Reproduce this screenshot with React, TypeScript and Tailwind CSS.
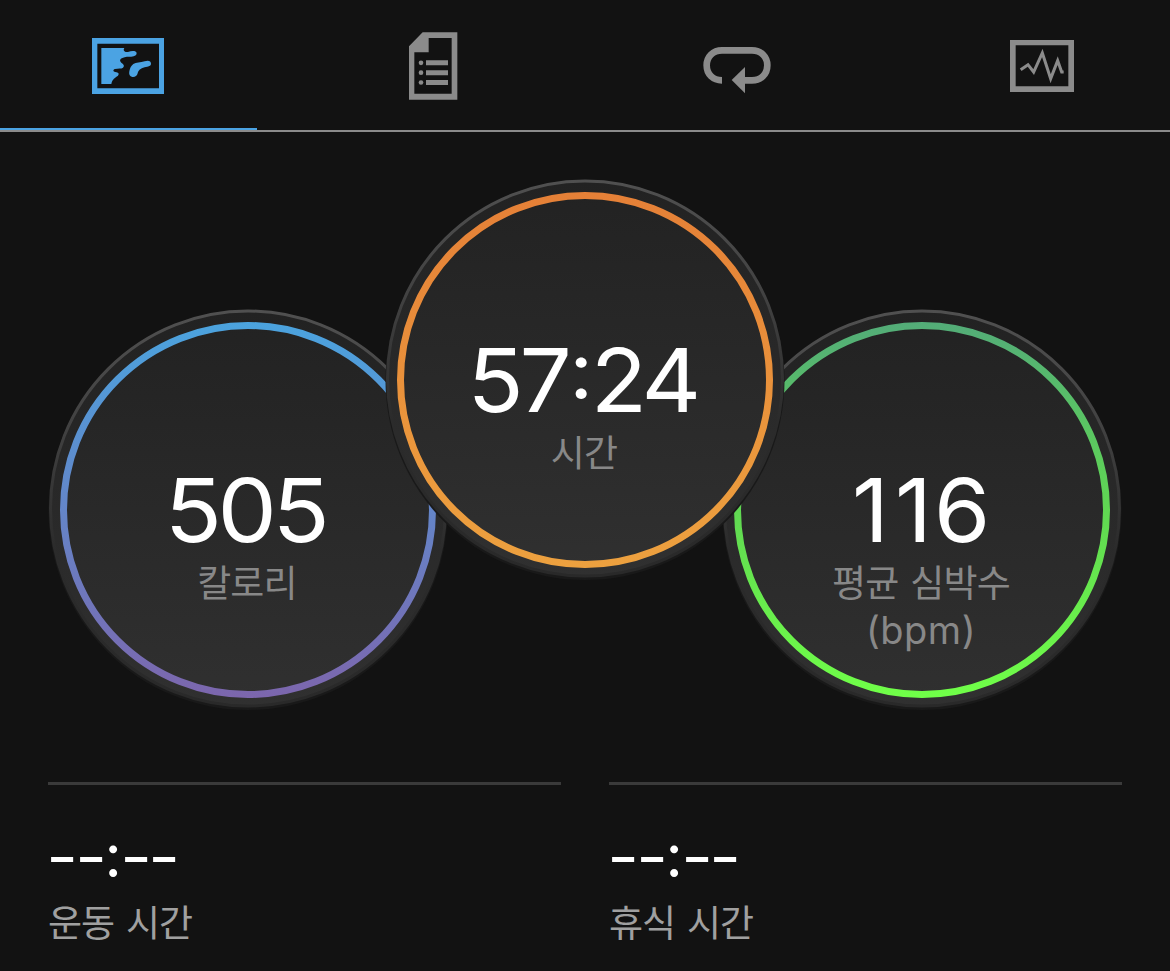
import type { ReactNode } from "react";

const FONT = "font-['Inter','Noto_Sans_CJK_KR',sans-serif]";

function MapIcon() {
  return (
    <svg width="72" height="56" viewBox="66 54 216 168" fill="#4ba3e3">
      <path fillRule="evenodd" d="M66 54H282V222H66ZM82 71V205H267V71Z" />
      <path d="M94 84H163C158 91 164 98 174 96C181 93 187 92 193 93C203 95 202 106 191 109C181 112 173 109 164 112C150 115 147 122 154 128C162 132 164 139 159 143C154 147 145 144 135 147C128 149 129 155 136 156C146 157 149 162 143 168C136 173 127 177 124 192H94Z" />
      <path d="M190 132C198 127 211 128 224 124C236 120 243 124 243 131C243 138 235 139 224 142C211 146 205 151 203 160C201 169 194 172 187 171C179 170 176 163 178 154C180 144 183 137 190 132Z" />
    </svg>
  );
}

function ListIcon() {
  return (
    <svg width="50" height="68" viewBox="54 36 150 204" fill="#8b8b8b">
      <path fillRule="evenodd" d="M98 37H202V239H57V79ZM116 54V97H73V221H185V54Z" />
      <circle cx="93" cy="128.500" r="7" />
      <circle cx="93" cy="158" r="7" />
      <circle cx="93" cy="187.500" r="7" />
      <path d="M108 121H174V136H108ZM108 151H174V166H108ZM108 180H174V195H108Z" />
    </svg>
  );
}

function LapIcon() {
  return (
    <svg width="68" height="48" viewBox="39 48 204 144">
      <path d="M96 151C69 151 50 133 50 106C50 80 69 61 96 61H186C213 61 232 80 232 106C232 133 213 151 186 151H160" fill="none" stroke="#8b8b8b" strokeWidth="20" />
      <path d="M125 150L165 111V190Z" fill="#8b8b8b" />
    </svg>
  );
}

function PulseIcon() {
  return (
    <svg width="64" height="52" viewBox="30 30 192 156">
      <path fillRule="evenodd" fill="#8b8b8b" d="M30 30H222V186H30ZM47 46V169H205V46Z" />
      <path d="M62 119L84 104L101 126L127 69L152 146L173 92L185 126H191" fill="none" stroke="#8b8b8b" strokeWidth="9" />
    </svg>
  );
}

function Tab({ active, children }: { active?: boolean; children: ReactNode }) {
  return (
    <button className={`flex h-[130px] w-[257px] items-center justify-center border-b-2 ${active ? "border-[#4ba3e3]" : "border-transparent"}`}>
      {children}
    </button>
  );
}

type DialProps = { id: string; value: ReactNode; label: ReactNode; stops: [string, string, string]; className: string };

function Dial({ id, value, label, stops, className }: DialProps) {
  return (
    <div className={`grid h-[400px] w-[400px] shrink-0 ${className}`}>
      <svg className="col-start-1 row-start-1 overflow-visible" width="400" height="400" viewBox="0 0 400 400">
        <defs>
          <linearGradient id={`${id}-ring`} x1="0" y1="12" x2="0" y2="388" gradientUnits="userSpaceOnUse">
            <stop offset="0" stopColor={stops[0]} />
            <stop offset="0.5" stopColor={stops[1]} />
            <stop offset="1" stopColor={stops[2]} />
          </linearGradient>
          <linearGradient id={`${id}-face`} x1="0" y1="0" x2="0" y2="1">
            <stop offset="0" stopColor="#222222" />
            <stop offset="1" stopColor="#303030" />
          </linearGradient>
          <linearGradient id={`${id}-edge`} x1="0" y1="0" x2="0" y2="400" gradientUnits="userSpaceOnUse">
            <stop offset="0" stopColor="#505050" />
            <stop offset="0.3" stopColor="#414141" />
            <stop offset="0.6" stopColor="#2b2b2b" />
            <stop offset="1" stopColor="#292929" />
          </linearGradient>
        </defs>
        <circle cx="200" cy="200.500" r="199.500" fill="#191919" />
        <circle cx="200" cy="198.500" r="197.500" fill={`url(#${id}-face)`} stroke={`url(#${id}-edge)`} strokeWidth="3" />
        <circle cx="200" cy="200" r="184.500" fill="none" stroke={`url(#${id}-ring)`} strokeWidth="7" />
      </svg>
      <div className="z-10 col-start-1 row-start-1 flex flex-col items-center pt-[150px] text-center">
        <span className="flex h-[100px] text-[88px] leading-[100px] whitespace-nowrap text-white">{value}</span>
        <span className="mr-[2px] text-[37px] leading-[48px] tracking-[-0.800px] text-[#888888] [word-spacing:2px]">{label}</span>
      </div>
    </div>
  );
}

function Dash() {
  return (
    <span className="flex w-[28.500px] justify-center">
      <span className="scale-x-[1.400]">-</span>
    </span>
  );
}

function Stat({ label }: { label: string }) {
  return (
    <div className="flex flex-1 flex-col border-t-3 border-[#3a3a3a]">
      <div className="mt-[48px] flex h-[50px] text-[48px] leading-[48px] font-semibold text-white">
        <Dash />
        <Dash />
        <span className="flex w-[16.500px] justify-center text-[60px] leading-[44px] font-normal">:</span>
        <Dash />
        <Dash />
      </div>
      <span className="mt-[17px] text-[37px] leading-[48px] tracking-[-1px] text-[#a0a0a0] [word-spacing:2.500px]">{label}</span>
    </div>
  );
}

export default function App() {
  return (
    <main className={`flex h-[971px] w-[1170px] flex-col overflow-hidden bg-[#121212] ${FONT}`}>
      <nav className="flex h-[132px] justify-between border-b-2 border-[#8b8b8b]">
        <Tab active><span className="mt-1 mr-px"><MapIcon /></span></Tab>
        <Tab><span className="mt-1"><ListIcon /></span></Tab>
        <Tab><span className="mt-3"><LapIcon /></span></Tab>
        <Tab><span className="mt-1 ml-[2px]"><PulseIcon /></span></Tab>
      </nav>
      <section className="flex h-[650px] items-start px-12 pt-12">
        <Dial
          id="calories"
          value={<span className="mr-[6px] scale-x-[1.070] tracking-[-4.200px]">505</span>}
          label="칼로리"
          stops={["#4ba3de", "#6485c8", "#7c66ad"]}
          className="mt-[130px]"
        />
        <Dial
          id="time"
          value={
            <span className="mr-[6px] flex scale-x-[1.050] tracking-[-4px]">
              <span>57</span>
              <span className="w-[22px] -translate-y-[11px] text-[79px]">:</span>
              <span>24</span>
            </span>
          }
          label="시간"
          stops={["#e58037", "#e9913b", "#eda13f"]}
          className="z-10 -mx-[63px]"
        />
        <Dial
          id="heart"
          value={<span className="scale-x-[1.030] tracking-[2px]"><span className="tracking-[6px]">1</span>16</span>}
          label={<>평균 심박수<br /><span className="inline-block h-[48px] -translate-y-px text-[38px] leading-[46px] tracking-[0.500px]">(bpm)</span></>}
          stops={["#53ac78", "#60d852", "#70ff48"]}
          className="mt-[130px]"
        />
      </section>
      <section className="flex gap-12 px-12">
        <Stat label="운동 시간" />
        <Stat label="휴식 시간" />
      </section>
    </main>
  );
}
